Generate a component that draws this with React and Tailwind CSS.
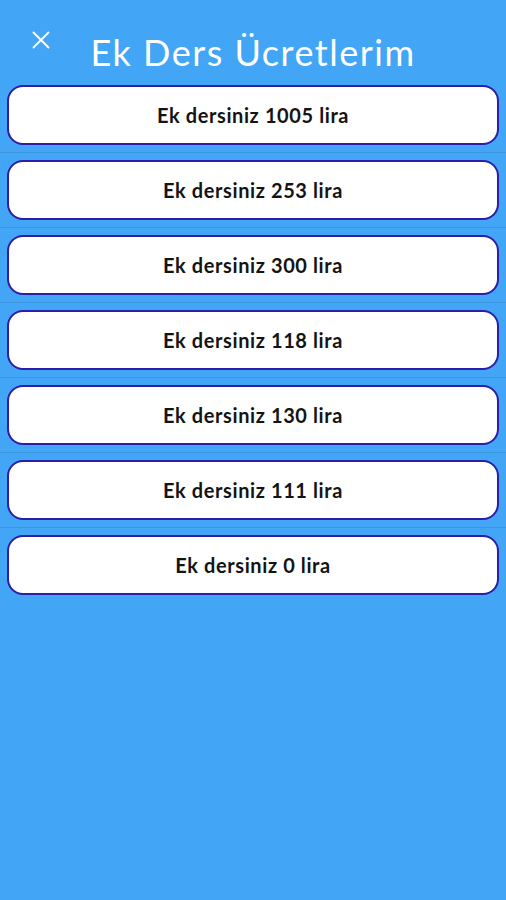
import { X } from 'lucide-react'

const amounts = [1005, 253, 300, 118, 130, 111, 0]

export default function App() {
  return (
    <div className="min-h-[900px] bg-[#42a5f5]" style={{ fontFamily: 'Lato, "Noto Sans", sans-serif' }}>
      <div className="relative h-[85px]">
        <button className="absolute left-[26px] top-[25px] text-white">
          <X size={30} strokeWidth={1.5} />
        </button>
        <h1 className="pt-[32px] text-center text-[36px] leading-[40px] tracking-[1.5px] text-white">Ek Ders Ücretlerim</h1>
      </div>
      <ul>
        {amounts.map((a, i) => (
          <li key={i}>
            <div className="mx-[7px] flex h-[60px] items-center justify-center rounded-[16px] border-2 border-[#2c1ea8] bg-white">
              <span className="text-[20px] font-bold tracking-[0.6px] text-[#141414]">Ek dersiniz {a} lira</span>
            </div>
            {i < amounts.length - 1 && <div className="my-[7px] h-px bg-[#3c97e0]" />}
          </li>
        ))}
      </ul>
    </div>
  )
}
